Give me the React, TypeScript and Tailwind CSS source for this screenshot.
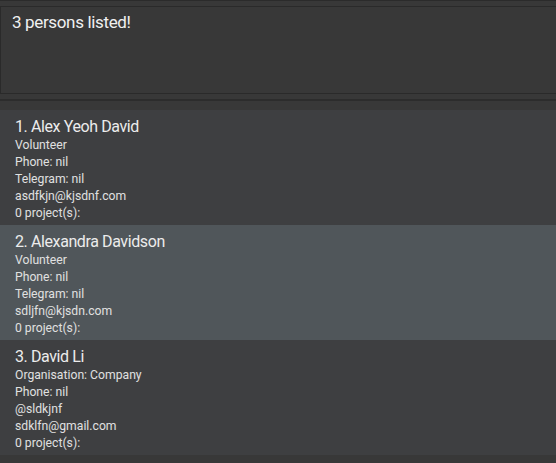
const persons = [
  {
    name: "Alex Yeoh David",
    lines: ["Volunteer", "Phone: nil", "Telegram: nil", "asdfkjn@kjsdnf.com", "0 project(s):"],
  },
  {
    name: "Alexandra Davidson",
    lines: ["Volunteer", "Phone: nil", "Telegram: nil", "sdljfn@kjsdn.com", "0 project(s):"],
  },
  {
    name: "David Li",
    lines: ["Organisation: Company", "Phone: nil", "@sldkjnf", "sdklfn@gmail.com", "0 project(s):"],
  },
];

function PersonCard({ index, name, lines, selected }: { index: number; name: string; lines: string[]; selected: boolean }) {
  return (
    <div className={"h-[115px] pl-[15px] pt-[7px] " + (selected ? "bg-[#50565a]" : "bg-[#3e3f41]")}>
      <div className="text-[16px] leading-[20px] tracking-[-0.4px] text-[#ececec]">
        {index}. {name}
      </div>
      {lines.map((l) => (
        <div key={l} className="text-[12.2px] leading-[17px] text-[#e0e0e0]">
          {l}
        </div>
      ))}
    </div>
  );
}

export default function App() {
  return (
    <div
      className="w-[556px] h-[463px] bg-[#383838] overflow-hidden flex flex-col"
      style={{ fontFamily: "Roboto, 'Liberation Sans', sans-serif" }}
    >
      <div className="h-px bg-[#2b2b2b]" />
      <div className="h-[5px]" />
      {/* Result display */}
      <div className="h-[88px] border-l border-t border-b border-[#2a2a2a] bg-[#383838] pl-[11px] pt-[5px]">
        <div className="text-[17px] leading-[20px] tracking-[-0.35px] text-[#f0f0f0]">3 persons listed!</div>
      </div>
      <div className="h-[5px]" />
      <div className="h-[2px] bg-[#2c2c2c]" />
      <div className="h-[9px]" />
      {/* Person list */}
      <div className="flex flex-col">
        {persons.map((p, i) => (
          <PersonCard key={p.name} index={i + 1} name={p.name} lines={p.lines} selected={i === 1} />
        ))}
      </div>
    </div>
  );
}
